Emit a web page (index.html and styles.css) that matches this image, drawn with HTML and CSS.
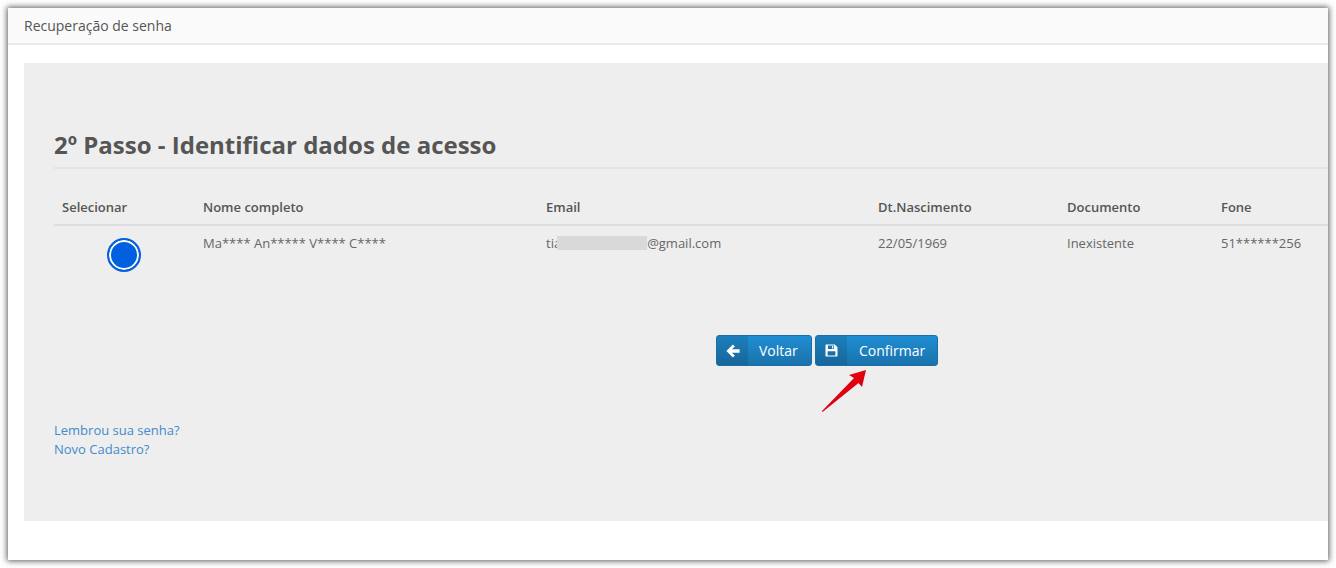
FILE: index.html
```html
<!DOCTYPE html>
<html lang="pt">
<head>
<meta charset="utf-8">
<title>Recuperação de senha</title>
<link rel="stylesheet" href="styles.css">
</head>
<body>
<div class="window">
  <header class="window-header">Recuperação de senha</header>
  <main class="window-body">
    <section class="panel">
      <h2 class="step-title">2º Passo - Identificar dados de acesso</h2>
      <div class="grid grid-head">
        <div>Selecionar</div>
        <div>Nome completo</div>
        <div>Email</div>
        <div>Dt.Nascimento</div>
        <div>Documento</div>
        <div>Fone</div>
      </div>
      <div class="grid grid-row">
        <div class="radio-cell"><span class="radio"></span></div>
        <div>Ma**** An***** V**** C****</div>
        <div class="email-cell">tia<span class="blur"></span>@gmail.com</div>
        <div>22/05/1969</div>
        <div>Inexistente</div>
        <div>51******256</div>
      </div>
      <div class="actions">
        <a class="btn btn-back">
          <span class="btn-icon">
            <svg width="14" height="14" viewBox="0 0 14 14"><path d="M6.9.5 8.9 2.5 5.9 5.3H13.6V8.7H5.9L8.9 11.5 6.9 13.5.4 7Z" fill="#fff"/></svg>
          </span>
          <span class="btn-label">Voltar</span>
        </a>
        <a class="btn btn-confirm">
          <span class="btn-icon">
            <svg width="13" height="13" viewBox="0 0 13 13"><path fill-rule="evenodd" d="M1.2.5H9.8L12.5 3.2V11.8A.7.7 0 0 1 11.8 12.5H1.2A.7.7 0 0 1 .5 11.8V1.2A.7.7 0 0 1 1.2.5ZM3 1.6V5H9V1.6ZM2.6 7.2V11.4H10.4V7.2Z" fill="#fff"/><rect x="7" y="2.1" width="1.2" height="2.3" fill="#fff"/></svg>
          </span>
          <span class="btn-label">Confirmar</span>
        </a>
      </div>
      <nav class="links">
        <a>Lembrou sua senha?</a>
        <a>Novo Cadastro?</a>
      </nav>
      <svg class="arrow" width="50" height="48" viewBox="0 0 50 48"><path d="M.8 43.2 33 10 28 7 45 2 41 19 37.5 15 1.6 44Z" fill="#e0000f"/></svg>
    </section>
  </main>
</div>
</body>
</html>
```
FILE: styles.css
```css
* { box-sizing: border-box; }
html, body { margin: 0; height: 100%; overflow: hidden; background: #fff; }
body {
  padding: 8px;
  font-family: "Open Sans", sans-serif;
  font-size: 13px;
  line-height: 19px;
  color: #666;
}
.window {
  width: 1320px;
  height: 552px;
  background: #fff;
  box-shadow: 0 0 6px 1px rgba(0,0,0,.65);
  overflow: hidden;
}
.window-header {
  height: 37px;
  padding: 8px 16px;
  background: #fafafa;
  border-bottom: 2px solid #ebebeb;
  font-size: 14px;
  color: #555;
}
.window-body { padding: 18px 0 0 16px; }
.panel {
  position: relative;
  width: 1304px;
  height: 458px;
  padding: 63px 0 0 30px;
  background: #eee;
  overflow: hidden;
}
.step-title {
  margin: 0;
  height: 43px;
  padding-top: 4px;
  border-bottom: 2px solid #e4e4e4;
  font-size: 24px;
  line-height: 29px;
  font-weight: 700;
  color: #555;
}
.grid {
  display: grid;
  grid-template-columns: 141px 343px 332px 189px 154px 115px;
}
.grid > div { padding-left: 8px; }
.grid-head {
  margin-top: 23px;
  height: 34px;
  padding-top: 6px;
  border-bottom: 2px solid #ddd;
  font-weight: 600;
  color: #555;
}
.grid-row { padding-top: 8px; height: 58px; }
.radio-cell { display: flex; justify-content: center; padding-top: 4px; }
.grid > .radio-cell { padding-left: 0; }
.radio {
  width: 34px;
  height: 34px;
  margin-right: 1px;
  border-radius: 50%;
  background: #0060df;
  border: 2px solid #0060df;
  box-shadow: inset 0 0 0 2px #fff;
}
.email-cell { white-space: nowrap; }
.blur {
  display: inline-block;
  width: 90px;
  height: 14px;
  margin-left: -4px;
  vertical-align: -2px;
  background: #d9d9d9;
}
.actions {
  display: flex;
  gap: 3px;
  margin: 51px 0 0 662px;
}
.btn {
  display: flex;
  height: 31px;
  border: 1px solid #1a6fa6;
  border-radius: 3px;
  background: linear-gradient(#1f8ed3, #1a72ab);
  color: #fff;
  font-size: 14px;
  line-height: 29px;
  overflow: hidden;
}
.btn-icon {
  width: 31px;
  display: flex;
  align-items: center;
  justify-content: center;
  background: rgba(0,0,0,.1);
}
.btn-back { width: 96px; }
.btn-confirm { width: 123px; }
.btn-label { padding-left: 11px; }
.btn-confirm .btn-label { padding-left: 12px; }
.links {
  display: flex;
  flex-direction: column;
  margin-top: 55px;
  color: #428bca;
}
.arrow {
  position: absolute;
  left: 797px;
  top: 305px;
}
```
